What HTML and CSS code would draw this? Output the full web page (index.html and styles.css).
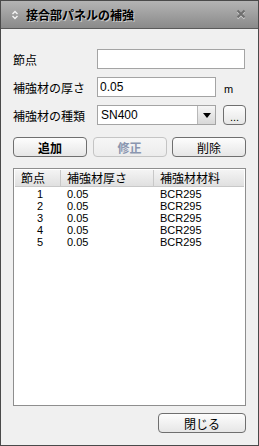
FILE: index.html
```html
<!DOCTYPE html>
<html lang="ja">
<head>
    <meta charset="UTF-8">
    <title>接合部パネルの補強</title>
    <link rel="stylesheet" href="styles.css">
</head>
<body>
    <div class="window">
        <div class="titlebar">
            <svg class="grip" width="8" height="10" viewBox="0 0 8 10">
                <path d="M1.5 4 L4 1.5 L6.5 4" fill="none" stroke="#f4f4f4" stroke-width="1.4"/>
                <path d="M1.5 6 L4 8.5 L6.5 6" fill="none" stroke="#f4f4f4" stroke-width="1.4"/>
            </svg>
            <span class="title">接合部パネルの補強</span>
            <svg class="close" width="10" height="11" viewBox="0 0 10 11">
                <path d="M1.5 2.5 L8.5 9.5 M8.5 2.5 L1.5 9.5" stroke="#d4d4d4" stroke-width="2"/>
                <path d="M1.5 1.5 L8.5 8.5 M8.5 1.5 L1.5 8.5" stroke="#6e6e6e" stroke-width="2"/>
            </svg>
        </div>

        <div class="content">
            <div class="row">
                <label class="label" for="node">節点</label>
                <input class="field wide" type="text" id="node">
            </div>
            <div class="row">
                <label class="label" for="thick">補強材の厚さ</label>
                <input class="field short" type="text" id="thick" value="0.05">
                <span class="unit">m</span>
            </div>
            <div class="row">
                <span class="label">補強材の種類</span>
                <div class="combo">
                    <span class="combo-text">SN400</span>
                    <span class="combo-btn">
                        <svg width="8" height="5" viewBox="0 0 8 5"><path d="M0 0 H8 L4 5 Z" fill="#000"/></svg>
                    </span>
                </div>
                <button class="btn dots" type="button">...</button>
            </div>

            <div class="actions">
                <button class="btn bold" type="button">追加</button>
                <button class="btn bold disabled" type="button">修正</button>
                <button class="btn" type="button">削除</button>
            </div>

            <div class="list">
                <div class="list-head">
                    <span class="col">節点</span>
                    <span class="col">補強材厚さ</span>
                    <span class="col last">補強材材料</span>
                </div>
                <div class="list-row"><span class="num">1</span><span>0.05</span><span>BCR295</span></div>
                <div class="list-row"><span class="num">2</span><span>0.05</span><span>BCR295</span></div>
                <div class="list-row"><span class="num">3</span><span>0.05</span><span>BCR295</span></div>
                <div class="list-row"><span class="num">4</span><span>0.05</span><span>BCR295</span></div>
                <div class="list-row"><span class="num">5</span><span>0.05</span><span>BCR295</span></div>
            </div>

            <div class="footer">
                <button class="btn close-btn" type="button">閉じる</button>
            </div>
        </div>
    </div>
</body>
</html>
```

FILE: styles.css
```css
body { margin: 0; padding: 0; font-family: "Noto Sans CJK JP", "Liberation Sans", sans-serif; font-size: 12px; color: #000; }
.window { width: 259px; height: 446px; box-sizing: border-box; border: 1px solid #4a4a4a; background: #f0f0f0; display: flex; flex-direction: column; }

.titlebar { height: 27px; flex: none; display: flex; align-items: center; padding: 0 12px 0 10px; background: linear-gradient(#b4b4b4, #8a8a8a); border-bottom: 1px solid #5a5a5a; }
.grip { margin-right: 7px; }
.title { flex: 1; font-weight: bold; font-size: 12px; text-shadow: 1px 1px 0 #d0d0d0; }

.content { flex: 1; display: flex; flex-direction: column; padding: 20px 12px 12px 12px; }

.row { display: flex; align-items: center; height: 20px; margin-bottom: 8px; }
.row:nth-child(3) { margin-bottom: 12px; }
.label { width: 84px; flex: none; }
.field { box-sizing: border-box; height: 20px; border: 1px solid #a4a4a4; background: #fff; padding: 0 2px; font-family: "Liberation Sans", sans-serif; font-size: 12px; outline: none; }
.wide { width: 148px; }
.short { width: 119px; }
.unit { margin-left: 8px; margin-top: 4px; font-family: "Liberation Sans", sans-serif; font-size: 11px; }

.combo { box-sizing: border-box; width: 119px; height: 20px; border: 1px solid #a4a4a4; background: #fff; display: flex; }
.combo-text { flex: 1; padding-left: 3px; line-height: 18px; font-family: "Liberation Sans", sans-serif; font-size: 12px; }
.combo-btn { width: 17px; border-left: 1px solid #b8b8b8; background: linear-gradient(#f6f6f6, #d8d8d8); display: flex; align-items: center; justify-content: center; }

.btn { box-sizing: border-box; height: 20px; padding: 0; border: 1px solid #6f6f6f; border-radius: 4px; background: linear-gradient(#fdfdfd, #e6e6e6); font: inherit; color: #000; }
.dots { width: 23px; margin-left: 7px; padding-top: 5px; font-family: "Liberation Sans", sans-serif; font-size: 11px; line-height: 11px; }
.bold { font-weight: bold; }
.disabled { border-color: #c4c4c4; background: linear-gradient(#f6f6f6, #ececec); color: #8a96b0; }

.actions { display: flex; justify-content: space-between; margin-bottom: 11px; }
.actions .btn { width: 74px; }

.list { height: 238px; box-sizing: border-box; border: 1px solid #8e8e8e; background: #fff; padding: 1px; }
.list-head, .list-row { display: grid; grid-template-columns: 46px 93px 1fr; }
.list-head { height: 16px; line-height: 16px; background: linear-gradient(#f4f4f4, #e0e0e0); border-bottom: 1px solid #c8c8c8; margin-bottom: 1px; }
.list-head .col { padding-left: 6px; border-right: 1px solid #c8c8c8; }
.list-head .last { border-right: none; }
.list-row { height: 12px; line-height: 12px; font-family: "Liberation Sans", sans-serif; font-size: 11px; }
.list-row span { padding-left: 6px; }
.list-row .num { text-align: right; padding: 0 18px 0 0; }

.footer { margin-top: auto; display: flex; justify-content: flex-end; }
.close-btn { width: 88px; }
```
